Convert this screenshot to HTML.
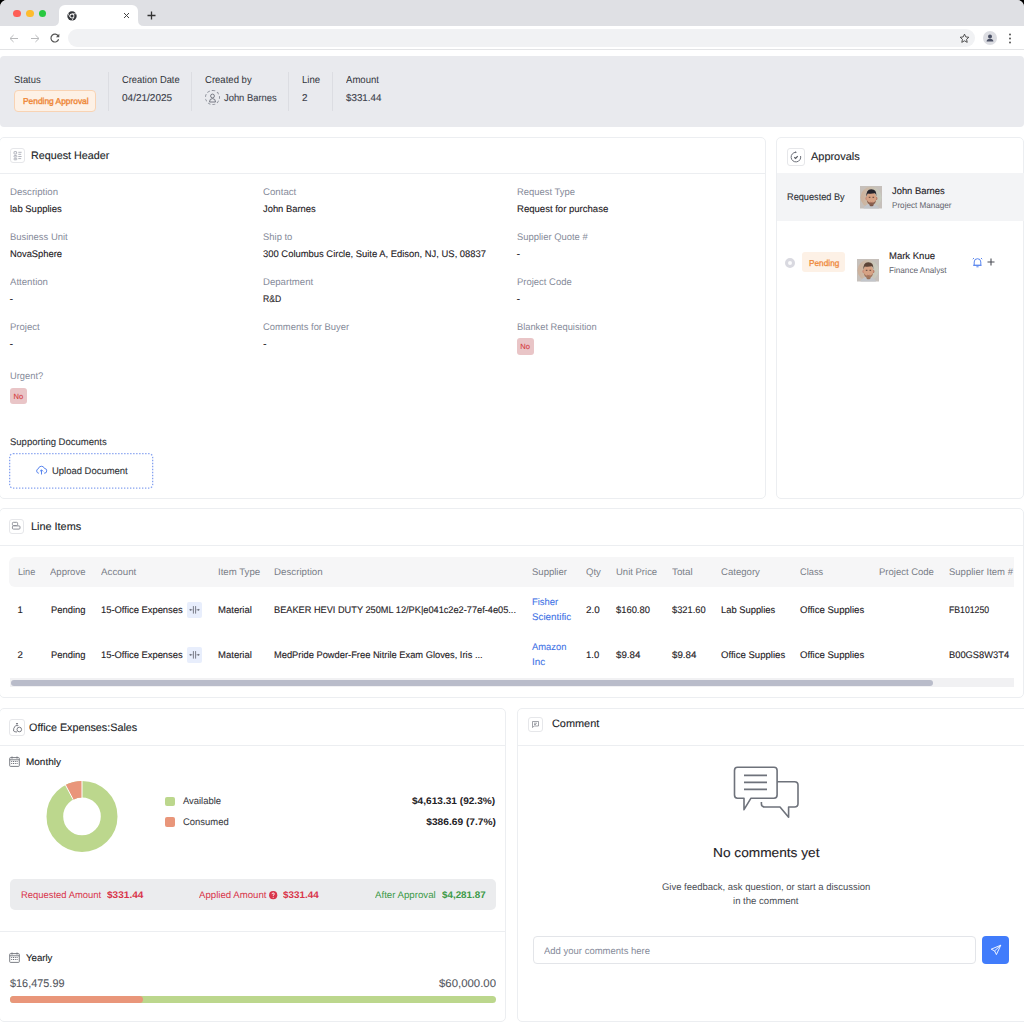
<!DOCTYPE html>
<html><head><meta charset="utf-8"><title>Requisition</title>
<style>
html,body{margin:0;padding:0;}
body{width:1024px;height:1024px;overflow:hidden;background:#000;font-family:"Liberation Sans",sans-serif;}
#root{position:relative;width:1024px;height:1024px;background:#fff;overflow:hidden;border-radius:7px 7px 0 0;}
.t{position:absolute;line-height:1;white-space:nowrap;text-rendering:geometricPrecision;}
.r{position:absolute;box-sizing:border-box;}
svg{position:absolute;overflow:visible;}
</style></head><body><div id="root">
<div class="r" style="left:0;top:0;width:1024px;height:26px;background:#dfe0e4"></div>
<div class="r" style="left:13.1px;top:9.7px;width:7.8px;height:7.8px;border-radius:50%;background:#fe5f57"></div>
<div class="r" style="left:25.8px;top:9.7px;width:7.8px;height:7.8px;border-radius:50%;background:#febc2e"></div>
<div class="r" style="left:38.5px;top:9.7px;width:7.8px;height:7.8px;border-radius:50%;background:#28c840"></div>
<div class="r" style="left:58.5px;top:5px;width:79px;height:22px;background:#fff;border-radius:6px 6px 0 0"></div>
<svg style="left:52.5px;top:20px" width="6" height="6"><path d="M0 6 Q6 6 6 0 L6 6 Z" fill="#fff"/></svg>
<svg style="left:137.5px;top:20px" width="6" height="6"><path d="M6 6 Q0 6 0 0 L0 6 Z" fill="#fff"/></svg>
<svg style="left:66.6px;top:10.6px" width="10" height="10" viewBox="0 0 10 10"><circle cx="5" cy="5" r="4.7" fill="#34363a"/><path d="M5.00 2.80 L10.00 2.80" stroke="#fff" stroke-width="0.7"/><path d="M6.91 6.10 L4.41 10.43" stroke="#fff" stroke-width="0.7"/><path d="M3.09 6.10 L0.59 1.77" stroke="#fff" stroke-width="0.7"/><circle cx="5" cy="5" r="2.45" fill="#fff"/><circle cx="5" cy="5" r="1.55" fill="#34363a"/></svg>
<svg style="left:123px;top:12px" width="7" height="7" viewBox="0 0 7 7"><path d="M1 1 L6 6 M6 1 L1 6" stroke="#444" stroke-width="1"/></svg>
<svg style="left:146.5px;top:11.3px" width="9" height="9" viewBox="0 0 9 9"><path d="M4.5 0.5 V8.5 M0.5 4.5 H8.5" stroke="#333" stroke-width="1.3"/></svg>
<div class="r" style="left:68.4px;top:29.3px;width:907px;height:17.6px;border-radius:9px;background:#f1f2f4"></div>
<div class="r" style="left:0;top:49px;width:1024px;height:1px;background:#e3e4e6"></div>
<svg style="left:9px;top:33.5px" width="10" height="9" viewBox="0 0 10 9"><path d="M9 4.5 H1.2 M4.6 1 L1 4.5 L4.6 8" fill="none" stroke="#b8b9bb" stroke-width="1"/></svg>
<svg style="left:29.5px;top:33.5px" width="10" height="9" viewBox="0 0 10 9"><path d="M1 4.5 H8.8 M5.4 1 L9 4.5 L5.4 8" fill="none" stroke="#b8b9bb" stroke-width="1"/></svg>
<svg style="left:50px;top:33.3px" width="10" height="10" viewBox="0 0 10 10"><path d="M8.3 3.2 A3.9 3.9 0 1 0 8.6 6.2" fill="none" stroke="#555" stroke-width="1.2"/><path d="M9.3 0.8 V4.2 H5.9 Z" fill="#555"/></svg>
<svg style="left:958.5px;top:32.5px" width="11" height="11" viewBox="0 0 24 24"><path d="M12 2.5 L14.9 8.6 L21.5 9.3 L16.5 13.8 L17.9 20.4 L12 17 L6.1 20.4 L7.5 13.8 L2.5 9.3 L9.1 8.6 Z" fill="none" stroke="#444" stroke-width="2"/></svg>
<div class="r" style="left:982.5px;top:31px;width:14px;height:14px;border-radius:50%;background:#dcdde2"></div>
<svg style="left:984.5px;top:33px" width="10" height="10" viewBox="0 0 10 10"><circle cx="5" cy="3.4" r="2" fill="#4a5064"/><path d="M1.6 8.6 Q1.8 5.8 5 5.8 Q8.2 5.8 8.4 8.6 Z" fill="#4a5064"/></svg>
<svg style="left:1008px;top:33px" width="4" height="11" viewBox="0 0 4 11"><circle cx="2" cy="1.5" r="1" fill="#555"/><circle cx="2" cy="5.5" r="1" fill="#555"/><circle cx="2" cy="9.5" r="1" fill="#555"/></svg>
<div class="r" style="left:0;top:56px;width:1024px;height:70.5px;background:#e9eaee;border-radius:4px"></div>
<div class="r" style="left:14px;top:90px;width:82px;height:22px;background:#fdf1e6;border:1px solid #f8d3b4;border-radius:4px"></div>
<div class="r" style="left:108px;top:71.7px;width:1px;height:39px;background:#dcdde2"></div>
<div class="r" style="left:191.4px;top:71.7px;width:1px;height:39px;background:#dcdde2"></div>
<div class="r" style="left:204.5px;top:90px;width:15px;height:15px;border-radius:50%;border:1px dashed #8d909a"></div>
<svg style="left:207.5px;top:92.5px" width="9" height="10" viewBox="0 0 9 10"><circle cx="4.5" cy="3" r="1.9" fill="none" stroke="#6b6e78" stroke-width="0.9"/><path d="M1.5 9 Q1.5 5.6 4.5 5.6 Q7.5 5.6 7.5 9 Z" fill="none" stroke="#6b6e78" stroke-width="0.9"/></svg>
<div class="r" style="left:288.3px;top:71.7px;width:1px;height:39px;background:#dcdde2"></div>
<div class="r" style="left:332.3px;top:71.7px;width:1px;height:39px;background:#dcdde2"></div>
<div class="r" style="left:-1px;top:137px;width:767px;height:361.5px;border:1px solid #eceef1;border-radius:5px;background:#fff"></div>
<div class="r" style="left:0;top:172.8px;width:765px;height:1px;background:#eceef1"></div>
<div class="r" style="left:9.5px;top:147.5px;width:15.5px;height:15.5px;border:1px solid #e6e7ea;border-radius:3px"></div>
<svg style="left:9.5px;top:147.75px" width="15" height="15" viewBox="0 0 15 15"><g fill="none" stroke="#a9acb5" stroke-width="0.9"><rect x="4" y="3.6" width="2.6" height="2.4" rx="0.4"/><rect x="3.9" y="7.5" width="3" height="1.5" rx="0.7"/><rect x="3.9" y="10.3" width="3" height="1.5" rx="0.7"/><path d="M8.3 4.3 H11.6 M8.3 6.3 H11.2 M8.3 8.5 H11.6 M8.3 10.6 H11.2"/></g></svg>
<div class="r" style="left:516.7px;top:337.8px;width:17.5px;height:17.2px;background:#e9c5c7;border-radius:3px"></div>
<div class="r" style="left:9.8px;top:387.5px;width:17.2px;height:16.6px;background:#e9c5c7;border-radius:3px"></div>
<svg style="left:9.4px;top:452.6px" width="145" height="36"><rect x="0.65" y="0.65" width="143" height="34.5" rx="3.5" fill="none" stroke="#86a2f0" stroke-width="1.3" stroke-dasharray="1.4 1.6"/></svg>
<svg style="left:35.5px;top:465px" width="11" height="10" viewBox="0 0 11 10"><path d="M3 8.2 H2.6 A2.3 2.3 0 0 1 2.4 3.7 A3.1 3.1 0 0 1 8.4 3.4 A2.4 2.4 0 0 1 8.3 8.2 H8" fill="none" stroke="#5a86ee" stroke-width="1"/><path d="M5.5 9.5 V5 M3.9 6.4 L5.5 4.8 L7.1 6.4" fill="none" stroke="#5a86ee" stroke-width="1"/></svg>
<div class="r" style="left:776px;top:137px;width:248px;height:361.5px;border:1px solid #eceef1;border-radius:5px;background:#fff"></div>
<div class="r" style="left:777px;top:173.2px;width:247px;height:47.6px;background:#f3f4f6"></div>
<div class="r" style="left:786.6px;top:148px;width:18.2px;height:17.5px;border:1px solid #e6e7ea;border-radius:3px"></div>
<svg style="left:789.5px;top:150.5px" width="12" height="12" viewBox="0 0 12 12"><path d="M5.9 1.3 A4.8 4.8 0 1 0 10.6 5" fill="none" stroke="#6d7079" stroke-width="1"/><path d="M5.1 0.3 L7 1.3 L5.1 2.3 Z" fill="#6d7079"/><path d="M4.3 6.3 L5.6 7.5 L7.7 5.1" fill="none" stroke="#55585f" stroke-width="1.2"/></svg>
<svg style="left:859.9px;top:186.2px" width="22" height="22.5" viewBox="0 0 22 22.5"><defs><linearGradient id="pg859" x1="0" x2="1"><stop offset="0" stop-color="#cdb09a"/><stop offset="1" stop-color="#c8cdc2"/></linearGradient></defs><rect width="22" height="22.5" fill="#c6c0bb"/><circle cx="11" cy="11.3" r="10.5" fill="url(#pg859)"/><path d="M3.5 22.5 Q5 18.6 9 18 L13.6 18 Q17.5 18.6 19 22.5 Z" fill="#c2c5ca"/><path d="M9.3 16.5 L9.6 19.5 Q11.3 21.2 13.5 19.5 L13.7 16.5 Z" fill="#7b5546"/><ellipse cx="6.5" cy="12.4" rx="1.1" ry="1.7" fill="#c98a76"/><ellipse cx="16.3" cy="12.4" rx="1.1" ry="1.7" fill="#b97a66"/><ellipse cx="11.4" cy="12.2" rx="4.8" ry="6.4" fill="#d6a284"/><path d="M6.5 10.8 Q5.8 3.6 11.2 3.3 Q16.9 3.2 16.4 10.6 Q15.8 7.2 14.8 7.3 Q11 8 7.8 7.5 Q7 8.6 6.5 10.8 Z" fill="#25242c"/><path d="M8.8 11.3 H10.4 M12.5 11.3 H14.1" stroke="#4e3a34" stroke-width="0.9"/><path d="M6.7 13.5 Q7.2 18.8 11.4 18.9 Q15.7 18.8 16.2 13.3 Q15.6 16.4 11.4 16.8 Q7.4 16.4 6.7 13.5 Z" fill="#7b5546" opacity="0.85"/><path d="M10.2 16.2 Q11.4 16.9 12.6 16.2" stroke="#9c5f52" stroke-width="0.7" fill="none"/></svg>
<div class="r" style="left:784.7px;top:257.6px;width:10.4px;height:10.4px;border-radius:50%;border:3.4px solid #d9d9e0;background:#fbfbfc"></div>
<div class="r" style="left:802.2px;top:252.3px;width:42.8px;height:20.1px;background:#fdf1e6;border-radius:3px"></div>
<svg style="left:857.1px;top:259.1px" width="22" height="22.5" viewBox="0 0 22 22.5"><defs><linearGradient id="pg857" x1="0" x2="1"><stop offset="0" stop-color="#cdb09a"/><stop offset="1" stop-color="#c8cdc2"/></linearGradient></defs><rect width="22" height="22.5" fill="#c6c0bb"/><circle cx="11" cy="11.3" r="10.5" fill="url(#pg857)"/><path d="M3.5 22.5 Q5 18.6 9 18 L13.6 18 Q17.5 18.6 19 22.5 Z" fill="#c2c5ca"/><path d="M9.3 16.5 L9.6 19.5 Q11.3 21.2 13.5 19.5 L13.7 16.5 Z" fill="#9a7058"/><ellipse cx="6.5" cy="12.4" rx="1.1" ry="1.7" fill="#c98a76"/><ellipse cx="16.3" cy="12.4" rx="1.1" ry="1.7" fill="#b97a66"/><ellipse cx="11.4" cy="12.2" rx="4.8" ry="6.4" fill="#d6a284"/><path d="M6.5 10.8 Q5.8 3.6 11.2 3.3 Q16.9 3.2 16.4 10.6 Q15.8 7.2 14.8 7.3 Q11 8 7.8 7.5 Q7 8.6 6.5 10.8 Z" fill="#5b4437"/><path d="M8.8 11.3 H10.4 M12.5 11.3 H14.1" stroke="#4e3a34" stroke-width="0.9"/><path d="M6.7 13.5 Q7.2 18.8 11.4 18.9 Q15.7 18.8 16.2 13.3 Q15.6 16.4 11.4 16.8 Q7.4 16.4 6.7 13.5 Z" fill="#9a7058" opacity="0.85"/><path d="M10.2 16.2 Q11.4 16.9 12.6 16.2" stroke="#9c5f52" stroke-width="0.7" fill="none"/></svg>
<svg style="left:972px;top:257px" width="11" height="11" viewBox="0 0 11 11"><path d="M2.2 8.3 V5 A3.3 3.3 0 0 1 8.8 5 V8.3 H1.4 H9.6 M4.4 9.8 H6.6 M0.8 2.2 L2 1 M10.2 2.2 L9 1" fill="none" stroke="#5a86ee" stroke-width="1"/></svg>
<svg style="left:986.5px;top:258.3px" width="8" height="8" viewBox="0 0 8 8"><path d="M4 0.5 V7.5 M0.5 4 H7.5" stroke="#4a4d55" stroke-width="1.1"/></svg>
<div class="r" style="left:-1px;top:508.1px;width:1024.5px;height:189.5px;border:1px solid #eceef1;border-radius:5px;background:#fff"></div>
<div class="r" style="left:0;top:545.3px;width:1024px;height:1px;background:#eceef1"></div>
<div class="r" style="left:9.2px;top:519.1px;width:15px;height:15.1px;border:1px solid #e6e7ea;border-radius:3px"></div>
<svg style="left:9.2px;top:519.1px" width="15" height="15" viewBox="0 0 15 15"><g fill="none" stroke="#8e9199" stroke-width="1"><rect x="3.4" y="3.3" width="5.2" height="3.2" rx="1"/><rect x="3.4" y="6.9" width="7.6" height="3.2" rx="1"/></g></svg>
<div class="r" style="left:9.4px;top:556.6px;width:1005px;height:30.4px;background:#f6f6f7;border-radius:6px 0 0 6px"></div>
<div class="r" style="left:187px;top:602.0px;width:15px;height:15.5px;background:#e8eefc;border-radius:2px"></div>
<svg style="left:187px;top:602.0px" width="15" height="15.5" viewBox="0 0 15 15.5"><g stroke="#5d6069" stroke-width="0.8" fill="none"><path d="M6.4 4.1 V11.6 M8.6 4.1 V11.6 M3.2 7.8 H5.4 M9.6 7.8 H11.8"/></g><g fill="#5d6069"><path d="M2.2 7.8 L3.7 6.7 V8.9 Z M12.8 7.8 L11.3 6.7 V8.9 Z"/></g></svg>
<div class="r" style="left:187px;top:647.0px;width:15px;height:15.5px;background:#e8eefc;border-radius:2px"></div>
<svg style="left:187px;top:647.0px" width="15" height="15.5" viewBox="0 0 15 15.5"><g stroke="#5d6069" stroke-width="0.8" fill="none"><path d="M6.4 4.1 V11.6 M8.6 4.1 V11.6 M3.2 7.8 H5.4 M9.6 7.8 H11.8"/></g><g fill="#5d6069"><path d="M2.2 7.8 L3.7 6.7 V8.9 Z M12.8 7.8 L11.3 6.7 V8.9 Z"/></g></svg>
<div class="r" style="left:9.5px;top:678px;width:1004.8px;height:9px;background:#f1f1f3"></div>
<div class="r" style="left:11.25px;top:680px;width:922px;height:5.5px;background:#b9bcca;border-radius:3px"></div>
<div class="r" style="left:-1px;top:708.3px;width:507px;height:313.5px;border:1px solid #eceef1;border-radius:5px;background:#fff"></div>
<div class="r" style="left:0;top:745px;width:505px;height:1px;background:#eceef1"></div>
<div class="r" style="left:9.4px;top:719px;width:16px;height:16.5px;border:1px solid #e6e7ea;border-radius:3px"></div>
<svg style="left:12px;top:721.5px" width="11" height="11" viewBox="0 0 11 11"><g fill="none" stroke="#5d6068" stroke-width="0.8"><path d="M4.2 1 L5 2.4 L5.8 1 M3.6 3.6 H6.4"/><path d="M3.4 3.8 Q1 6.5 1.6 9 Q2.4 10 5 10"/><circle cx="7.3" cy="7.5" r="2.3"/></g></svg>
<svg style="left:9.2px;top:756.2px" width="11" height="11" viewBox="0 0 11 11"><g fill="none" stroke="#6d7078" stroke-width="0.9"><rect x="0.7" y="1.6" width="9.6" height="8.8" rx="0.8"/><path d="M0.7 3.8 H10.3 M3 0.5 V2.6 M8 0.5 V2.6"/></g><g fill="#6d7078"><rect x="2.2" y="5" width="1" height="1"/><rect x="4" y="5" width="1" height="1"/><rect x="5.8" y="5" width="1" height="1"/><rect x="7.6" y="5" width="1" height="1"/><rect x="2.2" y="7" width="1" height="1"/><rect x="4" y="7" width="1" height="1"/><rect x="5.8" y="7" width="1" height="1"/><rect x="7.6" y="7" width="1" height="1"/></g></svg>
<svg style="left:0;top:0" width="1024" height="1024"><circle cx="82" cy="816.4" r="27.15" fill="none" stroke="#bcd78d" stroke-width="16.7"/><path d="M82.00 780.90 A35.5 35.5 0 0 0 65.49 784.97 L73.26 799.76 A18.8 18.8 0 0 1 82.00 797.60 Z" fill="#e9967a"/><path d="M82 798.1 V780.4 M73.26 799.76 L65.19 784.47" stroke="#fff" stroke-width="1"/></svg>
<div class="r" style="left:164.8px;top:796.5px;width:10.3px;height:9.8px;background:#bcd78d;border-radius:2px"></div>
<div class="r" style="left:164.8px;top:817.2px;width:10.3px;height:10.3px;background:#e9967a;border-radius:2px"></div>
<div class="r" style="left:9.5px;top:878.8px;width:486.5px;height:31.2px;background:#ebecee;border-radius:5px"></div>
<svg style="left:268.6px;top:890.6px" width="8.4" height="8.4" viewBox="0 0 8 8"><circle cx="4" cy="4" r="3.9" fill="#d9344a"/><path d="M2.9 3 Q2.9 1.9 4 1.9 Q5.1 1.9 5.1 2.9 Q5.1 3.6 4 4.1 V4.7" fill="none" stroke="#fff" stroke-width="0.9"/><circle cx="4" cy="6" r="0.5" fill="#fff"/></svg>
<div class="r" style="left:0;top:931px;width:505px;height:1px;background:#eceef1"></div>
<svg style="left:9.2px;top:951.5px" width="11" height="11" viewBox="0 0 11 11"><g fill="none" stroke="#6d7078" stroke-width="0.9"><rect x="0.7" y="1.6" width="9.6" height="8.8" rx="0.8"/><path d="M0.7 3.8 H10.3 M3 0.5 V2.6 M8 0.5 V2.6"/></g><g fill="#6d7078"><rect x="2.2" y="5" width="1" height="1"/><rect x="4" y="5" width="1" height="1"/><rect x="5.8" y="5" width="1" height="1"/><rect x="7.6" y="5" width="1" height="1"/><rect x="2.2" y="7" width="1" height="1"/><rect x="4" y="7" width="1" height="1"/><rect x="5.8" y="7" width="1" height="1"/><rect x="7.6" y="7" width="1" height="1"/></g></svg>
<div class="r" style="left:9.8px;top:995.5px;width:486.3px;height:7.5px;background:#bcd78d;border-radius:4px"></div>
<div class="r" style="left:9.8px;top:995.5px;width:133.2px;height:7.5px;background:#e9967a;border-radius:4px"></div>
<div class="r" style="left:516.9px;top:708.3px;width:512px;height:314px;border:1px solid #eceef1;border-radius:5px;background:#fff"></div>
<div class="r" style="left:517.9px;top:744.8px;width:507px;height:1px;background:#eceef1"></div>
<div class="r" style="left:527.6px;top:717.2px;width:15.1px;height:15px;border:1px solid #e6e7ea;border-radius:3px"></div>
<svg style="left:530.5px;top:720px" width="9" height="9" viewBox="0 0 9 9"><path d="M1.5 1.5 H7.5 V6 H3.2 L1.5 7.5 Z M3 3.2 H6 M3 4.5 H5" fill="none" stroke="#7a7d85" stroke-width="0.7"/></svg>
<svg style="left:730px;top:762px" width="72" height="60" viewBox="0 0 72 60"><g fill="none" stroke="#6e727b" stroke-width="1.6" stroke-linejoin="round"><path d="M7.5 5.3 H44 Q47.1 5.3 47.1 8.4 V33 Q47.1 36.2 44 36.2 H21 L14 47.7 V36.2 H7.5 Q4.5 36.2 4.5 33 V8.4 Q4.5 5.3 7.5 5.3 Z"/><path d="M14 13.4 H37 M14 20.4 H37 M14 27.4 H37"/><path d="M47.1 19.7 H64.5 Q68 19.7 68 23 V41.8 Q68 45 64.5 45 H58.6 V55.3 L50 45 H34.6 Q31.4 45 31.4 41.8 V40"/></g></svg>
<div class="r" style="left:532.7px;top:935.8px;width:443.5px;height:28.6px;border:1px solid #e3e5e9;border-radius:4px"></div>
<div class="r" style="left:981.9px;top:936.4px;width:26.8px;height:27.4px;background:#417cfb;border-radius:4px"></div>
<svg style="left:989.5px;top:944px" width="12" height="12" viewBox="0 0 12 12"><path d="M10.8 1.2 L1.2 5.2 L4.6 6.9 L6.4 10.6 Z M4.6 6.9 L10.8 1.2" fill="none" stroke="#fff" stroke-width="0.9" stroke-linejoin="round"/></svg>
<div class="t" style="left:14.10px;top:76.05px;font-size:10.10px;color:#33363d;transform:scaleX(0.9313);transform-origin:left center;">Status</div>
<div class="t" style="left:22.50px;top:96.92px;font-size:8.60px;color:#ef8a3c;-webkit-text-stroke:0.4px #ef8a3c;transform:scaleX(0.9734);transform-origin:left center;">Pending Approval</div>
<div class="t" style="left:121.50px;top:76.05px;font-size:10.10px;color:#33363d;transform:scaleX(0.9257);transform-origin:left center;">Creation Date</div>
<div class="t" style="left:121.50px;top:94.02px;font-size:9.90px;color:#3c3f4b;-webkit-text-stroke:0.12px #3c3f4b;transform:scaleX(1.0134);transform-origin:left center;">04/21/2025</div>
<div class="t" style="left:204.60px;top:76.05px;font-size:10.10px;color:#33363d;transform:scaleX(0.9452);transform-origin:left center;">Created by</div>
<div class="t" style="left:223.80px;top:94.02px;font-size:9.90px;color:#3c3f4b;-webkit-text-stroke:0.12px #3c3f4b;transform:scaleX(0.9496);transform-origin:left center;">John Barnes</div>
<div class="t" style="left:301.90px;top:76.05px;font-size:10.10px;color:#33363d;transform:scaleX(0.9518);transform-origin:left center;">Line</div>
<div class="t" style="left:301.90px;top:94.02px;font-size:9.90px;color:#3c3f4b;-webkit-text-stroke:0.12px #3c3f4b;">2</div>
<div class="t" style="left:345.70px;top:76.05px;font-size:10.10px;color:#33363d;transform:scaleX(0.9475);transform-origin:left center;">Amount</div>
<div class="t" style="left:345.70px;top:94.02px;font-size:9.90px;color:#3c3f4b;-webkit-text-stroke:0.12px #3c3f4b;transform:scaleX(0.9911);transform-origin:left center;">$331.44</div>
<div class="t" style="left:31.25px;top:150.76px;font-size:10.80px;color:#222428;-webkit-text-stroke:0.12px #222428;transform:scaleX(0.9951);transform-origin:left center;">Request Header</div>
<div class="t" style="left:9.80px;top:187.97px;font-size:9.60px;color:#868b9a;transform:scaleX(1.0015);transform-origin:left center;">Description</div>
<div class="t" style="left:9.80px;top:204.97px;font-size:9.60px;color:#1f2226;-webkit-text-stroke:0.12px #1f2226;transform:scaleX(0.9882);transform-origin:left center;">lab Supplies</div>
<div class="t" style="left:263.30px;top:187.97px;font-size:9.60px;color:#868b9a;transform:scaleX(1.0060);transform-origin:left center;">Contact</div>
<div class="t" style="left:263.30px;top:204.97px;font-size:9.60px;color:#1f2226;-webkit-text-stroke:0.12px #1f2226;transform:scaleX(0.9774);transform-origin:left center;">John Barnes</div>
<div class="t" style="left:516.70px;top:187.97px;font-size:9.60px;color:#868b9a;transform:scaleX(0.9836);transform-origin:left center;">Request Type</div>
<div class="t" style="left:516.70px;top:204.97px;font-size:9.60px;color:#1f2226;-webkit-text-stroke:0.12px #1f2226;transform:scaleX(0.9949);transform-origin:left center;">Request for purchase</div>
<div class="t" style="left:9.80px;top:232.97px;font-size:9.60px;color:#868b9a;transform:scaleX(0.9830);transform-origin:left center;">Business Unit</div>
<div class="t" style="left:9.80px;top:249.97px;font-size:9.60px;color:#1f2226;-webkit-text-stroke:0.12px #1f2226;transform:scaleX(0.9759);transform-origin:left center;">NovaSphere</div>
<div class="t" style="left:263.30px;top:232.97px;font-size:9.60px;color:#868b9a;transform:scaleX(0.9828);transform-origin:left center;">Ship to</div>
<div class="t" style="left:263.30px;top:249.97px;font-size:9.60px;color:#1f2226;-webkit-text-stroke:0.12px #1f2226;transform:scaleX(0.9819);transform-origin:left center;">300 Columbus Circle, Suite A, Edison, NJ, US, 08837</div>
<div class="t" style="left:516.70px;top:232.97px;font-size:9.60px;color:#868b9a;transform:scaleX(0.9814);transform-origin:left center;">Supplier Quote #</div>
<div class="t" style="left:516.70px;top:249.97px;font-size:9.60px;color:#1f2226;-webkit-text-stroke:0.12px #1f2226;">-</div>
<div class="t" style="left:9.80px;top:277.97px;font-size:9.60px;color:#868b9a;transform:scaleX(1.0026);transform-origin:left center;">Attention</div>
<div class="t" style="left:9.80px;top:294.97px;font-size:9.60px;color:#1f2226;-webkit-text-stroke:0.12px #1f2226;">-</div>
<div class="t" style="left:263.30px;top:277.97px;font-size:9.60px;color:#868b9a;transform:scaleX(1.0010);transform-origin:left center;">Department</div>
<div class="t" style="left:263.30px;top:294.97px;font-size:9.60px;color:#1f2226;-webkit-text-stroke:0.12px #1f2226;transform:scaleX(0.8983);transform-origin:left center;">R&amp;D</div>
<div class="t" style="left:516.70px;top:277.97px;font-size:9.60px;color:#868b9a;transform:scaleX(0.9855);transform-origin:left center;">Project Code</div>
<div class="t" style="left:516.70px;top:294.97px;font-size:9.60px;color:#1f2226;-webkit-text-stroke:0.12px #1f2226;">-</div>
<div class="t" style="left:9.80px;top:322.97px;font-size:9.60px;color:#868b9a;transform:scaleX(0.9936);transform-origin:left center;">Project</div>
<div class="t" style="left:9.80px;top:339.97px;font-size:9.60px;color:#1f2226;-webkit-text-stroke:0.12px #1f2226;">-</div>
<div class="t" style="left:263.30px;top:322.97px;font-size:9.60px;color:#868b9a;transform:scaleX(0.9792);transform-origin:left center;">Comments for Buyer</div>
<div class="t" style="left:263.30px;top:339.97px;font-size:9.60px;color:#1f2226;-webkit-text-stroke:0.12px #1f2226;">-</div>
<div class="t" style="left:516.70px;top:322.97px;font-size:9.60px;color:#868b9a;transform:scaleX(0.9697);transform-origin:left center;">Blanket Requisition</div>
<div class="t" style="left:520.30px;top:343.37px;font-size:7.60px;color:#d53a3d;-webkit-text-stroke:0.1px #d53a3d;">No</div>
<div class="t" style="left:9.80px;top:372.47px;font-size:9.60px;color:#868b9a;transform:scaleX(0.9740);transform-origin:left center;">Urgent?</div>
<div class="t" style="left:13.60px;top:393.07px;font-size:7.60px;color:#d53a3d;-webkit-text-stroke:0.1px #d53a3d;">No</div>
<div class="t" style="left:9.80px;top:437.97px;font-size:9.60px;color:#2f3237;-webkit-text-stroke:0.1px #2f3237;transform:scaleX(0.9905);transform-origin:left center;">Supporting Documents</div>
<div class="t" style="left:52.10px;top:466.87px;font-size:9.60px;color:#2f3237;-webkit-text-stroke:0.1px #2f3237;transform:scaleX(0.9852);transform-origin:left center;">Upload Document</div>
<div class="t" style="left:811.00px;top:152.16px;font-size:10.80px;color:#222428;-webkit-text-stroke:0.12px #222428;transform:scaleX(1.0136);transform-origin:left center;">Approvals</div>
<div class="t" style="left:787.00px;top:193.17px;font-size:9.60px;color:#2f3237;-webkit-text-stroke:0.1px #2f3237;transform:scaleX(0.9565);transform-origin:left center;">Requested By</div>
<div class="t" style="left:891.70px;top:186.97px;font-size:9.60px;color:#1f2226;-webkit-text-stroke:0.12px #1f2226;transform:scaleX(0.9774);transform-origin:left center;">John Barnes</div>
<div class="t" style="left:891.70px;top:200.69px;font-size:8.40px;color:#5f636c;transform:scaleX(0.9694);transform-origin:left center;">Project Manager</div>
<div class="t" style="left:808.90px;top:258.52px;font-size:8.60px;color:#ef8a3c;-webkit-text-stroke:0.3px #ef8a3c;transform:scaleX(0.9630);transform-origin:left center;">Pending</div>
<div class="t" style="left:888.60px;top:251.97px;font-size:9.60px;color:#1f2226;-webkit-text-stroke:0.12px #1f2226;transform:scaleX(0.9908);transform-origin:left center;">Mark Knue</div>
<div class="t" style="left:888.60px;top:265.99px;font-size:8.40px;color:#5f636c;transform:scaleX(0.9737);transform-origin:left center;">Finance Analyst</div>
<div class="t" style="left:30.70px;top:522.36px;font-size:10.80px;color:#222428;-webkit-text-stroke:0.12px #222428;transform:scaleX(1.0070);transform-origin:left center;">Line Items</div>
<div class="t" style="left:17.60px;top:567.77px;font-size:9.60px;color:#7a7e88;transform:scaleX(0.9503);transform-origin:left center;">Line</div>
<div class="t" style="left:50.20px;top:567.77px;font-size:9.60px;color:#7a7e88;transform:scaleX(0.9925);transform-origin:left center;">Approve</div>
<div class="t" style="left:100.60px;top:567.77px;font-size:9.60px;color:#7a7e88;transform:scaleX(1.0177);transform-origin:left center;">Account</div>
<div class="t" style="left:217.50px;top:567.77px;font-size:9.60px;color:#7a7e88;transform:scaleX(1.0053);transform-origin:left center;">Item Type</div>
<div class="t" style="left:274.25px;top:567.77px;font-size:9.60px;color:#7a7e88;transform:scaleX(1.0142);transform-origin:left center;">Description</div>
<div class="t" style="left:531.50px;top:567.77px;font-size:9.60px;color:#7a7e88;transform:scaleX(0.9919);transform-origin:left center;">Supplier</div>
<div class="t" style="left:585.75px;top:567.77px;font-size:9.60px;color:#7a7e88;transform:scaleX(0.9989);transform-origin:left center;">Qty</div>
<div class="t" style="left:615.75px;top:567.77px;font-size:9.60px;color:#7a7e88;transform:scaleX(0.9897);transform-origin:left center;">Unit Price</div>
<div class="t" style="left:672.00px;top:567.77px;font-size:9.60px;color:#7a7e88;transform:scaleX(1.0207);transform-origin:left center;">Total</div>
<div class="t" style="left:720.75px;top:567.77px;font-size:9.60px;color:#7a7e88;transform:scaleX(0.9996);transform-origin:left center;">Category</div>
<div class="t" style="left:799.75px;top:567.77px;font-size:9.60px;color:#7a7e88;transform:scaleX(0.9645);transform-origin:left center;">Class</div>
<div class="t" style="left:878.75px;top:567.77px;font-size:9.60px;color:#7a7e88;transform:scaleX(0.9900);transform-origin:left center;">Project Code</div>
<div class="t" style="left:948.50px;top:567.77px;font-size:9.60px;color:#7a7e88;transform:scaleX(0.9905);transform-origin:left center;">Supplier Item #</div>
<div class="t" style="left:17.50px;top:605.72px;font-size:9.60px;color:#1f2226;-webkit-text-stroke:0.12px #1f2226;">1</div>
<div class="t" style="left:50.75px;top:605.72px;font-size:9.60px;color:#1f2226;-webkit-text-stroke:0.12px #1f2226;transform:scaleX(0.9769);transform-origin:left center;">Pending</div>
<div class="t" style="left:100.75px;top:605.72px;font-size:9.60px;color:#1f2226;-webkit-text-stroke:0.12px #1f2226;transform:scaleX(0.9772);transform-origin:left center;">15-Office Expenses</div>
<div class="t" style="left:217.50px;top:605.72px;font-size:9.60px;color:#1f2226;-webkit-text-stroke:0.12px #1f2226;transform:scaleX(0.9939);transform-origin:left center;">Material</div>
<div class="t" style="left:17.50px;top:650.72px;font-size:9.60px;color:#1f2226;-webkit-text-stroke:0.12px #1f2226;">2</div>
<div class="t" style="left:50.75px;top:650.72px;font-size:9.60px;color:#1f2226;-webkit-text-stroke:0.12px #1f2226;transform:scaleX(0.9769);transform-origin:left center;">Pending</div>
<div class="t" style="left:100.75px;top:650.72px;font-size:9.60px;color:#1f2226;-webkit-text-stroke:0.12px #1f2226;transform:scaleX(0.9772);transform-origin:left center;">15-Office Expenses</div>
<div class="t" style="left:217.50px;top:650.72px;font-size:9.60px;color:#1f2226;-webkit-text-stroke:0.12px #1f2226;transform:scaleX(0.9939);transform-origin:left center;">Material</div>
<div class="t" style="left:274.25px;top:605.72px;font-size:9.60px;color:#1f2226;-webkit-text-stroke:0.12px #1f2226;transform:scaleX(0.9598);transform-origin:left center;">BEAKER HEVI DUTY 250ML 12/PK|e041c2e2-77ef-4e05...</div>
<div class="t" style="left:274.25px;top:650.72px;font-size:9.60px;color:#1f2226;-webkit-text-stroke:0.12px #1f2226;transform:scaleX(0.9711);transform-origin:left center;">MedPride Powder-Free Nitrile Exam Gloves, Iris ...</div>
<div class="t" style="left:531.50px;top:597.97px;font-size:9.60px;color:#3f73e6;-webkit-text-stroke:0.08px #3f73e6;transform:scaleX(0.9814);transform-origin:left center;">Fisher</div>
<div class="t" style="left:531.50px;top:613.22px;font-size:9.60px;color:#3f73e6;-webkit-text-stroke:0.08px #3f73e6;transform:scaleX(1.0207);transform-origin:left center;">Scientific</div>
<div class="t" style="left:531.50px;top:642.97px;font-size:9.60px;color:#3f73e6;-webkit-text-stroke:0.08px #3f73e6;transform:scaleX(0.9774);transform-origin:left center;">Amazon</div>
<div class="t" style="left:531.50px;top:657.97px;font-size:9.60px;color:#3f73e6;-webkit-text-stroke:0.08px #3f73e6;transform:scaleX(1.0296);transform-origin:left center;">Inc</div>
<div class="t" style="left:585.75px;top:605.72px;font-size:9.60px;color:#1f2226;-webkit-text-stroke:0.12px #1f2226;transform:scaleX(1.0259);transform-origin:left center;">2.0</div>
<div class="t" style="left:585.75px;top:650.72px;font-size:9.60px;color:#1f2226;-webkit-text-stroke:0.12px #1f2226;transform:scaleX(0.9864);transform-origin:left center;">1.0</div>
<div class="t" style="left:615.75px;top:605.72px;font-size:9.60px;color:#1f2226;-webkit-text-stroke:0.12px #1f2226;transform:scaleX(0.9775);transform-origin:left center;">$160.80</div>
<div class="t" style="left:615.75px;top:650.72px;font-size:9.60px;color:#1f2226;-webkit-text-stroke:0.12px #1f2226;transform:scaleX(1.0174);transform-origin:left center;">$9.84</div>
<div class="t" style="left:672.00px;top:605.72px;font-size:9.60px;color:#1f2226;-webkit-text-stroke:0.12px #1f2226;transform:scaleX(0.9701);transform-origin:left center;">$321.60</div>
<div class="t" style="left:672.00px;top:650.72px;font-size:9.60px;color:#1f2226;-webkit-text-stroke:0.12px #1f2226;transform:scaleX(1.0174);transform-origin:left center;">$9.84</div>
<div class="t" style="left:720.75px;top:605.72px;font-size:9.60px;color:#1f2226;-webkit-text-stroke:0.12px #1f2226;transform:scaleX(0.9761);transform-origin:left center;">Lab Supplies</div>
<div class="t" style="left:720.75px;top:650.72px;font-size:9.60px;color:#1f2226;-webkit-text-stroke:0.12px #1f2226;transform:scaleX(0.9971);transform-origin:left center;">Office Supplies</div>
<div class="t" style="left:799.75px;top:605.72px;font-size:9.60px;color:#1f2226;-webkit-text-stroke:0.12px #1f2226;transform:scaleX(0.9971);transform-origin:left center;">Office Supplies</div>
<div class="t" style="left:799.75px;top:650.72px;font-size:9.60px;color:#1f2226;-webkit-text-stroke:0.12px #1f2226;transform:scaleX(0.9971);transform-origin:left center;">Office Supplies</div>
<div class="t" style="left:948.50px;top:605.72px;font-size:9.60px;color:#1f2226;-webkit-text-stroke:0.12px #1f2226;transform:scaleX(0.9058);transform-origin:left center;">FB101250</div>
<div class="t" style="left:948.50px;top:650.72px;font-size:9.60px;color:#1f2226;-webkit-text-stroke:0.12px #1f2226;transform:scaleX(0.9724);transform-origin:left center;">B00GS8W3T4</div>
<div class="t" style="left:28.90px;top:722.71px;font-size:10.80px;color:#222428;-webkit-text-stroke:0.12px #222428;transform:scaleX(0.9974);transform-origin:left center;">Office Expenses:Sales</div>
<div class="t" style="left:26.40px;top:758.27px;font-size:9.60px;color:#222428;-webkit-text-stroke:0.12px #222428;transform:scaleX(1.0388);transform-origin:left center;">Monthly</div>
<div class="t" style="left:182.70px;top:797.27px;font-size:9.60px;color:#3d4046;-webkit-text-stroke:0.08px #3d4046;transform:scaleX(0.9792);transform-origin:left center;">Available</div>
<div class="t" style="left:182.70px;top:817.77px;font-size:9.60px;color:#3d4046;-webkit-text-stroke:0.08px #3d4046;transform:scaleX(0.9839);transform-origin:left center;">Consumed</div>
<div class="t" style="right:528.40px;top:797.36px;font-size:9.50px;color:#1f2226;font-weight:700;transform:scaleX(1.0644);transform-origin:right center;">$4,613.31 (92.3%)</div>
<div class="t" style="right:528.40px;top:817.86px;font-size:9.50px;color:#1f2226;font-weight:700;transform:scaleX(1.0730);transform-origin:right center;">$386.69 (7.7%)</div>
<div class="t" style="left:20.50px;top:891.07px;font-size:9.60px;color:#d9344a;transform:scaleX(0.9822);transform-origin:left center;">Requested Amount</div>
<div class="t" style="left:106.75px;top:891.07px;font-size:9.60px;color:#d9344a;font-weight:700;transform:scaleX(1.0510);transform-origin:left center;">$331.44</div>
<div class="t" style="left:199.25px;top:891.07px;font-size:9.60px;color:#d9344a;transform:scaleX(1.0033);transform-origin:left center;">Applied Amount</div>
<div class="t" style="left:283.00px;top:891.07px;font-size:9.60px;color:#d9344a;font-weight:700;transform:scaleX(1.0289);transform-origin:left center;">$331.44</div>
<div class="t" style="left:375.25px;top:891.07px;font-size:9.60px;color:#3c9a48;transform:scaleX(1.0068);transform-origin:left center;">After Approval</div>
<div class="t" style="left:441.75px;top:891.07px;font-size:9.60px;color:#3c9a48;font-weight:700;transform:scaleX(1.0234);transform-origin:left center;">$4,281.87</div>
<div class="t" style="left:26.25px;top:953.72px;font-size:9.60px;color:#222428;-webkit-text-stroke:0.12px #222428;transform:scaleX(1.0043);transform-origin:left center;">Yearly</div>
<div class="t" style="left:10.00px;top:978.62px;font-size:11.20px;color:#55585f;-webkit-text-stroke:0.1px #55585f;transform:scaleX(0.9734);transform-origin:left center;">$16,475.99</div>
<div class="t" style="right:528.50px;top:978.62px;font-size:11.20px;color:#55585f;-webkit-text-stroke:0.1px #55585f;transform:scaleX(1.0178);transform-origin:right center;">$60,000.00</div>
<div class="t" style="left:552.00px;top:718.76px;font-size:10.80px;color:#222428;-webkit-text-stroke:0.12px #222428;transform:scaleX(1.0096);transform-origin:left center;">Comment</div>
<div class="t" style="left:712.90px;top:846.30px;font-size:13.00px;color:#1f2226;-webkit-text-stroke:0.12px #1f2226;transform:scaleX(1.0534);transform-origin:left center;">No comments yet</div>
<div class="t" style="left:661.60px;top:882.87px;font-size:9.60px;color:#4a4d55;transform:scaleX(0.9867);transform-origin:left center;">Give feedback, ask question, or start a discussion</div>
<div class="t" style="left:733.20px;top:896.67px;font-size:9.60px;color:#4a4d55;transform:scaleX(0.9981);transform-origin:left center;">in the comment</div>
<div class="t" style="left:543.60px;top:946.77px;font-size:9.60px;color:#868b9a;transform:scaleX(0.9895);transform-origin:left center;">Add your comments here</div>
</div></body></html>
